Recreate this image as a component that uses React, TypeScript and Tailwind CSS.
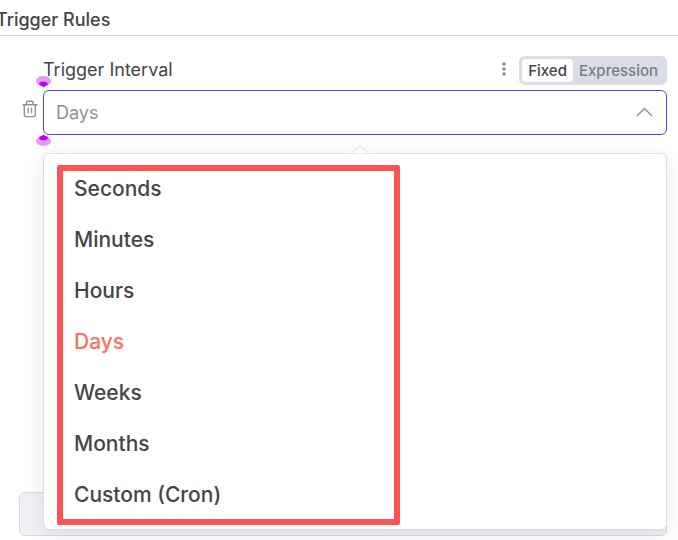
import { useState } from "react";
import clsx from "clsx";

const intervals = [
  "Seconds",
  "Minutes",
  "Hours",
  "Days",
  "Weeks",
  "Months",
  "Custom (Cron)",
];

const modes = ["Fixed", "Expression"];

const TrashIcon = () => (
  <svg width="16" height="18" viewBox="0 0 16 18" fill="none" stroke="#8d8f96" strokeWidth="1.4">
    <path d="M0.5 4.7H15.5M4.5 4.5V2.6Q4.5 1.2 5.8 1.2H9.7Q11 1.2 11 2.6V4.5M2.3 4.7V14.6Q2.3 16.6 4 16.6H11.6Q13.3 16.6 13.3 14.6V4.7M6.2 7.8V13.2M9.5 7.8V13.2" />
  </svg>
);

const Marker = ({ className }: { className: string }) => (
  <svg className={clsx("absolute", className)} width="15" height="12" viewBox="0 0 15 12">
    <ellipse cx="7.5" cy="5" rx="7.5" ry="5" fill="#e699fb" />
    <path d="M2.8 8Q4 5.6 7.5 5.6Q11 5.6 12.2 8Q11.4 9.6 9 10.2L7.5 11.4L6 10.2Q3.6 9.6 2.8 8Z" fill="#c000f8" />
  </svg>
);

export default function App() {
  const [interval, setInterval] = useState("Days");
  const [mode, setMode] = useState("Fixed");
  const [open, setOpen] = useState(true);

  return (
    <main className="flex min-h-screen flex-col overflow-hidden bg-white pb-1 font-['Inter',sans-serif] text-[#444547]">
      <h2 className="-ml-1 border-b border-[#d9dbe6] pt-2 pb-1 text-lg leading-[23px] font-medium">
        Trigger Rules
      </h2>

      <section className="mr-[11px] ml-[43px] pt-5">
        <div className="flex h-[34px] items-start justify-between">
          <label htmlFor="interval" className="text-lg leading-7">
            Trigger Interval
          </label>
          <div className="flex items-center gap-3">
            <button type="button" aria-label="Parameter options" className="pb-1">
              <svg width="6" height="16" viewBox="0 0 6 16" fill="#85878e">
                <circle cx="3" cy="3" r="1.7" />
                <circle cx="3" cy="8" r="1.7" />
                <circle cx="3" cy="13" r="1.7" />
              </svg>
            </button>
            <div className="flex h-[29px] rounded-md bg-[#dadde8] p-[3px]">
              {modes.map((item) => (
                <button
                  key={item}
                  type="button"
                  aria-pressed={mode === item}
                  onClick={() => setMode(item)}
                  className={clsx(
                    "rounded px-1.5 text-[15px] leading-[23px] font-medium",
                    mode === item ? "bg-white text-[#444547]" : "text-[#7b7d85]"
                  )}
                >
                  {item}
                </button>
              ))}
            </div>
          </div>
        </div>

        <div className="relative">
          <button type="button" aria-label="Delete rule" className="absolute top-2.5 -left-[21px]">
            <TrashIcon />
          </button>
          <select
            id="interval"
            value={interval}
            onChange={(e) => setInterval(e.target.value)}
            onMouseDown={(e) => {
              e.preventDefault();
              setOpen(!open);
            }}
            className="block h-[45px] w-full appearance-none rounded-md border border-[#5944c4] bg-white px-3 text-lg text-[#909298] outline-none"
          >
            {intervals.map((item) => (
              <option key={item}>{item}</option>
            ))}
          </select>
          <svg
            className={clsx("pointer-events-none absolute top-[17px] right-3.5", !open && "rotate-180")}
            width="17"
            height="10"
            viewBox="0 0 17 10"
            fill="none"
            stroke="#8d8f96"
            strokeWidth="1.4"
          >
            <path d="M1 9L8.5 1.5L16 9" />
          </svg>
          <Marker className="-top-3.5 -left-[7px]" />
          <Marker className="-bottom-[11px] -left-[7px] rotate-180" />

          {open && (
            <div className="absolute inset-x-0 top-[63px] z-10 rounded-md border border-[#d9dde7] bg-white px-[13px] pt-[11px] pb-1 shadow-[0_4px_24px_rgba(0,0,0,0.09)]">
              <svg
                className="absolute -top-[9px] left-[307px]"
                width="18"
                height="10"
                viewBox="0 0 18 10"
                fill="white"
                stroke="#d9dde7"
              >
                <path d="M0.5 8.5L9 0.7L17.5 8.5" />
                <path d="M1 9.5H17" stroke="white" />
              </svg>
              <ul
                role="listbox"
                aria-label="Trigger Interval"
                className="flex w-[343px] flex-col gap-[9px] rounded-xs border-6 border-[#ff5252]"
              >
                {intervals.map((item) => (
                  <li key={item} role="option" aria-selected={interval === item}>
                    <button
                      type="button"
                      onClick={() => {
                        setInterval(item);
                        setOpen(false);
                      }}
                      className={clsx(
                        "block w-full px-[11px] pt-0.5 pb-2 text-left text-[21px] leading-8 font-medium",
                        interval === item && "text-[#ff6f5c]"
                      )}
                    >
                      {item}
                    </button>
                  </li>
                ))}
              </ul>
            </div>
          )}
        </div>
      </section>

      <button
        type="button"
        aria-label="Add rule"
        className="mt-auto mr-[11px] ml-[19px] h-11 rounded-md border border-[#d5d9e3] bg-[#f0f1f7]"
      />
    </main>
  );
}
